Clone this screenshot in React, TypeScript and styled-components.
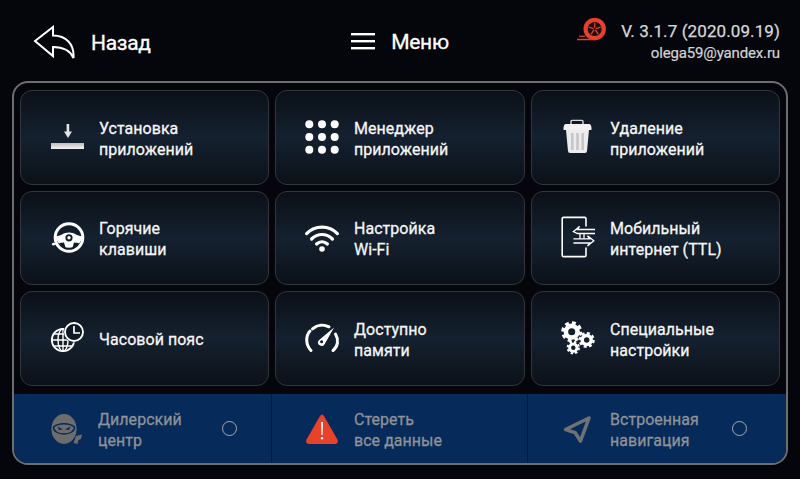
import React from 'react';
import styled, { createGlobalStyle } from 'styled-components';

const GlobalStyle = createGlobalStyle`
  html, body {
    margin: 0;
    padding: 0;
    background: #04060b;
  }
`;

const Screen = styled.div`
  width: 800px;
  height: 479px;
  overflow: hidden;
  background: #04060b;
  color: #fff;
  font-family: Roboto, "Liberation Sans", sans-serif;
`;

/* ─── Header ─────────────────────────────────────── */

const Header = styled.header`
  height: 81px;
  display: grid;
  grid-template-columns: 1fr auto 1fr;
  align-items: center;
`;

const BackGroup = styled.div`
  display: flex;
  align-items: center;
  gap: 16px;
  padding: 5px 0 0 33px;
`;

const MenuGroup = styled.div`
  display: flex;
  align-items: center;
  gap: 16px;
  padding-top: 2px;
`;

const HeaderLabel = styled.span`
  font-size: 21px;
  font-weight: 400;
  letter-spacing: -0.3px;
  -webkit-text-stroke: 0.3px #fff;
`;

const InfoGroup = styled.div`
  display: flex;
  flex-direction: column;
  align-items: flex-end;
  padding: 0 20px 1px 0;
`;

const VersionRow = styled.div`
  display: flex;
  align-items: center;
  gap: 13px;
`;

const VersionText = styled.span`
  font-size: 17px;
  font-weight: 400;
  letter-spacing: 0.1px;
  color: #d8d8d8;
  -webkit-text-stroke: 0.25px #d8d8d8;
`;

const MailText = styled.span`
  font-size: 15px;
  font-weight: 400;
  letter-spacing: -0.14px;
  color: #d4d4d4;
  -webkit-text-stroke: 0.2px #d4d4d4;
`;

/* ─── Panel ──────────────────────────────────────── */

const Frame = styled.main`
  width: 776px;
  height: 384px;
  box-sizing: border-box;
  margin-left: 12px;
  border: 2px solid #6e6e6e;
  border-radius: 16px;
  overflow: hidden;
  padding-top: 7px;
  display: flex;
  flex-direction: column;
`;

const Grid = styled.div`
  display: grid;
  grid-template-columns: repeat(3, 1fr);
  grid-auto-rows: 94.5px;
  gap: 6px;
  padding: 0 6px;
`;

const Card = styled.div`
  display: flex;
  align-items: center;
  gap: 14px;
  padding-left: 28px;
  box-sizing: border-box;
  border: 1px solid #33373c;
  border-radius: 12px;
  background: linear-gradient(180deg, #0a1017 0%, #152130 50%, #0b1118 100%);
`;

const Band = styled.div`
  margin-top: 8.5px;
  flex: 1;
  display: grid;
  grid-template-columns: 257px 256px 1fr;
  background: #062a5a;
`;

const BandItem = styled.div<{ $divider?: boolean }>`
  position: relative;
  display: flex;
  align-items: center;
  gap: 14px;
  padding-left: ${(p) => (p.$divider ? '32px' : '34px')};
  border-left: ${(p) => (p.$divider ? '1px solid #0b1a30' : 'none')};
`;

const Label = styled.div<{ $dim?: boolean }>`
  font-size: 17px;
  font-weight: 400;
  line-height: 21px;
  letter-spacing: 0.05px;
  white-space: pre-line;
  position: relative;
  top: 1.4px;
  transform: scaleX(0.94);
  transform-origin: left center;
  color: ${(p) => (p.$dim ? '#8f9297' : '#f6f6f6')};
  -webkit-text-stroke: 0.3px ${(p) => (p.$dim ? '#8f9297' : '#f6f6f6')};
`;

const Radio = styled.span<{ $left: number }>`
  position: absolute;
  left: ${(p) => p.$left}px;
  top: 50%;
  width: 15px;
  height: 15px;
  margin-top: -8px;
  box-sizing: border-box;
  border: 1.5px solid #a6a8ab;
  border-radius: 50%;
`;

const IconSvg = styled.svg`
  width: 36px;
  height: 36px;
  flex: none;
  overflow: visible;
`;

/* ─── Icons ──────────────────────────────────────── */

const BackIcon = () => (
  <svg width="42" height="36" viewBox="33 27 42 36" fill="none">
    <path
      d="M35 43 L53 29 V37.5 C66 37.5 74.5 46 73.5 60 C70 52 63 49 53 49 V58 Z"
      stroke="#fff"
      strokeWidth="2"
      strokeLinejoin="miter"
    />
  </svg>
);

const BurgerIcon = () => (
  <svg width="24" height="17" viewBox="0 0 24 17" fill="#fff">
    <rect y="0" width="24" height="2.4" />
    <rect y="7" width="24" height="2.4" />
    <rect y="14" width="24" height="2.4" />
  </svg>
);

const LogoIcon = () => (
  <svg width="32" height="26" viewBox="0 0 32 26">
    <circle cx="18.7" cy="11" r="11.2" fill="#e8402f" />
    <path d="M20 22.2 H1 V20.8 H12 Z" fill="#e8402f" />
    <rect x="3" y="17.6" width="6" height="1.2" fill="#e8402f" />
    <circle cx="18.7" cy="11" r="7" fill="#1d0f10" />
    <g stroke="#e8402f" strokeWidth="1.3">
      {[0, 72, 144, 216, 288].map((a) => (
        <line key={a} x1="18.7" y1="11" x2="18.7" y2="4.8" transform={`rotate(${a} 18.7 11)`} />
      ))}
    </g>
    <circle cx="18.7" cy="11" r="1.2" fill="#1d0f10" />
  </svg>
);

const InstallIcon = () => (
  <IconSvg viewBox="0 0 36 36">
    <defs>
      <linearGradient id="installBar" x1="0" y1="0" x2="0" y2="1">
        <stop offset="0" stopColor="#bdbdbd" />
        <stop offset="1" stopColor="#f4f4f4" />
      </linearGradient>
    </defs>
    <rect x="2" y="24" width="33" height="6" fill="url(#installBar)" />
    <rect x="17.6" y="5" width="2.6" height="8" fill="#e4e4e4" />
    <path d="M15 12.5 H23 L19 19 Z" fill="#e4e4e4" />
  </IconSvg>
);

const DotsIcon = () => (
  <IconSvg viewBox="0 0 36 36" fill="#fff">
    {[5.3, 18, 30.7].flatMap((y) =>
      [5.3, 18, 30.7].map((x) => <circle key={`${x}-${y}`} cx={x} cy={y} r="4" />)
    )}
  </IconSvg>
);

const TrashIcon = () => (
  <IconSvg viewBox="0 0 36 36">
    <path d="M11 5 V2.4 Q11 1.4 12 1.4 H22 Q23 1.4 23 2.4 V5" fill="none" stroke="#d8d8d8" strokeWidth="1.4" />
    <path d="M6 5 H29 Q31.5 5 31.5 10 V11 H3.5 V10 Q3.5 5 6 5 Z" fill="#f2f2f2" />
    <path d="M6 11 H29 L27 32 Q26.8 34 25 34 H10 Q8.2 34 8 32 Z" fill="#ececec" />
    <rect x="11" y="14" width="2.6" height="17" fill="#c6c6c6" />
    <rect x="16.2" y="14" width="2.6" height="17" fill="#c6c6c6" />
    <rect x="21.4" y="14" width="2.6" height="17" fill="#c6c6c6" />
  </IconSvg>
);

const WheelIcon = () => (
  <IconSvg viewBox="0 0 36 36" fill="#fff">
    <circle cx="20" cy="17.5" r="13.8" fill="none" stroke="#fff" strokeWidth="3" />
    <path d="M6.6 16.5 C13 16 14 12.6 20 12.6 C26 12.6 27 16 33.4 16.5 A13.6 13.6 0 0 1 6.6 16.5 Z" />
    <path d="M10 23 L15 22.6 L16.8 28.4 C13.6 27.6 11 25.6 10 23 Z" fill="#121c28" />
    <path d="M30 23 L25 22.6 L23.2 28.4 C26.4 27.6 29 25.6 30 23 Z" fill="#121c28" />
    <circle cx="20" cy="17.8" r="3.6" fill="#121c28" />
    <circle cx="20" cy="17.8" r="1.7" />
    <circle cx="4.4" cy="24.2" r="1.4" />
    <rect x="4.6" y="23.2" width="3.4" height="1.6" />
  </IconSvg>
);

const WifiIcon = () => (
  <IconSvg viewBox="0 0 36 36" fill="none" stroke="#fff" strokeWidth="3.2" strokeLinecap="round">
    <path d="M2.6 13.6 C11 5 25 5 33.4 13.6" />
    <path d="M7.6 19 C13.6 13 22.4 13 28.4 19" />
    <path d="M12.6 24 C15.8 21 20.2 21 23.4 24" />
    <circle cx="18" cy="29" r="2.8" fill="#fff" stroke="none" />
  </IconSvg>
);

const ClockGlobeIcon = () => (
  <IconSvg viewBox="0 0 36 36" fill="none" stroke="#fff" strokeWidth="1.4">
    <circle cx="14" cy="20" r="11.2" strokeWidth="1.8" />
    <ellipse cx="14" cy="20" rx="5" ry="11.2" />
    <path d="M14 9 V31 M3 20 H25 M4.6 14 H23.4 M4.6 26 H23.4" />
    <circle cx="25" cy="12" r="10.4" fill="#101923" stroke="none" />
    <circle cx="25" cy="12" r="9" strokeWidth="1.9" />
    <path d="M25 6 V13 H31" strokeWidth="1.7" />
  </IconSvg>
);

const GaugeIcon = () => (
  <IconSvg viewBox="0 0 36 36" fill="none" stroke="#fff" strokeWidth="3" strokeLinecap="round">
    <path d="M7 30.5 C1.5 25 1.5 16 6 11" />
    <path d="M8.5 8.8 C13.5 4.6 20 4.2 25 6.8" />
    <path d="M31.5 14 C35 20 34 26.5 29 30.5" />
    <path d="M30 7.5 L20.6 24.2 A3.4 3.4 0 0 1 14.6 20.4 Z" fill="#fff" stroke="none" />
    <circle cx="17.6" cy="21.8" r="1.5" fill="#101923" stroke="none" />
  </IconSvg>
);

const PhoneIcon = () => (
  <IconSvg viewBox="0 0 36 36" fill="none" stroke="#fff" strokeWidth="1.5">
    <path d="M26 6.6 V-1.2 Q26 -2.6 24.6 -2.6 H3.6 Q2.2 -2.6 2.2 -1.2 V35.2 Q2.2 36.6 3.6 36.6 H24.6 Q26 36.6 26 35.2 V27.4" strokeWidth="1.6" />
    <path d="M35 9.5 H17.5 L19.5 6.4 L13.4 11.5 L17.5 13.5 H35" strokeWidth="1.3" />
    <path d="M13.4 18.8 H29.5 L27.5 15.8 L33.8 20.8 L27.5 26 L29.5 23 H13.4" strokeWidth="1.3" />
    <path d="M20 13.5 V18.8 M24 13.5 V18.8" strokeWidth="1.3" />
  </IconSvg>
);

const Gear = ({ cx, cy, r }: { cx: number; cy: number; r: number }) => {
  const teethR = r * 0.86;
  const step = (2 * Math.PI * teethR) / 8;
  return (
    <g fill="none" stroke="#fff">
      <circle cx={cx} cy={cy} r={r * 0.56} strokeWidth={r * 0.44} />
      <circle cx={cx} cy={cy} r={teethR} strokeWidth={r * 0.3} strokeDasharray={`${step * 0.55} ${step * 0.45}`} />
    </g>
  );
};

const GearsIcon = () => (
  <IconSvg viewBox="0 0 36 36">
    <Gear cx={11.7} cy={11.7} r={10.4} />
    <Gear cx={26.7} cy={20} r={8} />
    <Gear cx={13.3} cy={27.7} r={6.6} />
  </IconSvg>
);

const NinjaIcon = () => (
  <IconSvg viewBox="0 0 36 36">
    <ellipse cx="16" cy="18" rx="12.6" ry="15" fill="#6d6d6d" />
    <path d="M5.6 16 C10 11.6 22 11.6 26.4 16 C27 20 22 23 16 23 C10 23 5 20 5.6 16 Z" fill="#6d6d6d" stroke="#062a5a" strokeWidth="1.4" />
    <path d="M9.5 15.5 L15 18.5 L11 19 Z M22.5 15.5 L17 18.5 L21 19 Z" fill="#062a5a" />
    <path d="M28 25 L34 23.5 L33 28 L30.5 29 L29.5 33 L25.5 32 Z" fill="#6d6d6d" />
  </IconSvg>
);

const WarningIcon = () => (
  <IconSvg viewBox="0 0 36 36">
    <path d="M20 5 Q18 2 16 5 L2.6 28.6 Q0.8 32.6 5 33 H31 Q35.2 32.6 33.4 28.6 Z" fill="#e8432a" />
    <path d="M17 11 H19 L18.6 24 H17.4 Z" fill="#f4f4f4" />
    <circle cx="18" cy="27.2" r="1.2" fill="#f4f4f4" />
  </IconSvg>
);

const NavIcon = () => (
  <IconSvg viewBox="0 0 36 36">
    <path
      d="M29 7 L5.5 18.5 L15 21.6 L20.5 30 Z"
      fill="none"
      stroke="#6f7173"
      strokeWidth="3.6"
      strokeLinejoin="round"
    />
  </IconSvg>
);

/* ─── Data ───────────────────────────────────────── */

const cards: { text: string; icon: React.ReactNode }[] = [
  { text: 'Установка\nприложений', icon: <InstallIcon /> },
  { text: 'Менеджер\nприложений', icon: <DotsIcon /> },
  { text: 'Удаление\nприложений', icon: <TrashIcon /> },
  { text: 'Горячие\nклавиши', icon: <WheelIcon /> },
  { text: 'Настройка\nWi-Fi', icon: <WifiIcon /> },
  { text: 'Мобильный\nинтернет (TTL)', icon: <PhoneIcon /> },
  { text: 'Часовой пояс', icon: <ClockGlobeIcon /> },
  { text: 'Доступно\nпамяти', icon: <GaugeIcon /> },
  { text: 'Специальные\nнастройки', icon: <GearsIcon /> },
];

export default function App() {
  return (
    <Screen>
      <GlobalStyle />
      <Header>
        <BackGroup>
          <BackIcon />
          <HeaderLabel>Назад</HeaderLabel>
        </BackGroup>
        <MenuGroup>
          <BurgerIcon />
          <HeaderLabel>Меню</HeaderLabel>
        </MenuGroup>
        <InfoGroup>
          <VersionRow>
            <LogoIcon />
            <VersionText>V. 3.1.7 (2020.09.19)</VersionText>
          </VersionRow>
          <MailText>olega59@yandex.ru</MailText>
        </InfoGroup>
      </Header>

      <Frame>
        <Grid>
          {cards.map((card) => (
            <Card key={card.text}>
              {card.icon}
              <Label>{card.text}</Label>
            </Card>
          ))}
        </Grid>
        <Band>
          <BandItem>
            <NinjaIcon />
            <Label $dim>{'Дилерский\nцентр'}</Label>
            <Radio $left={208} />
          </BandItem>
          <BandItem $divider>
            <WarningIcon />
            <Label $dim>{'Стереть\nвсе данные'}</Label>
          </BandItem>
          <BandItem $divider>
            <NavIcon />
            <Label $dim>{'Встроенная\nнавигация'}</Label>
            <Radio $left={204} />
          </BandItem>
        </Band>
      </Frame>
    </Screen>
  );
}
